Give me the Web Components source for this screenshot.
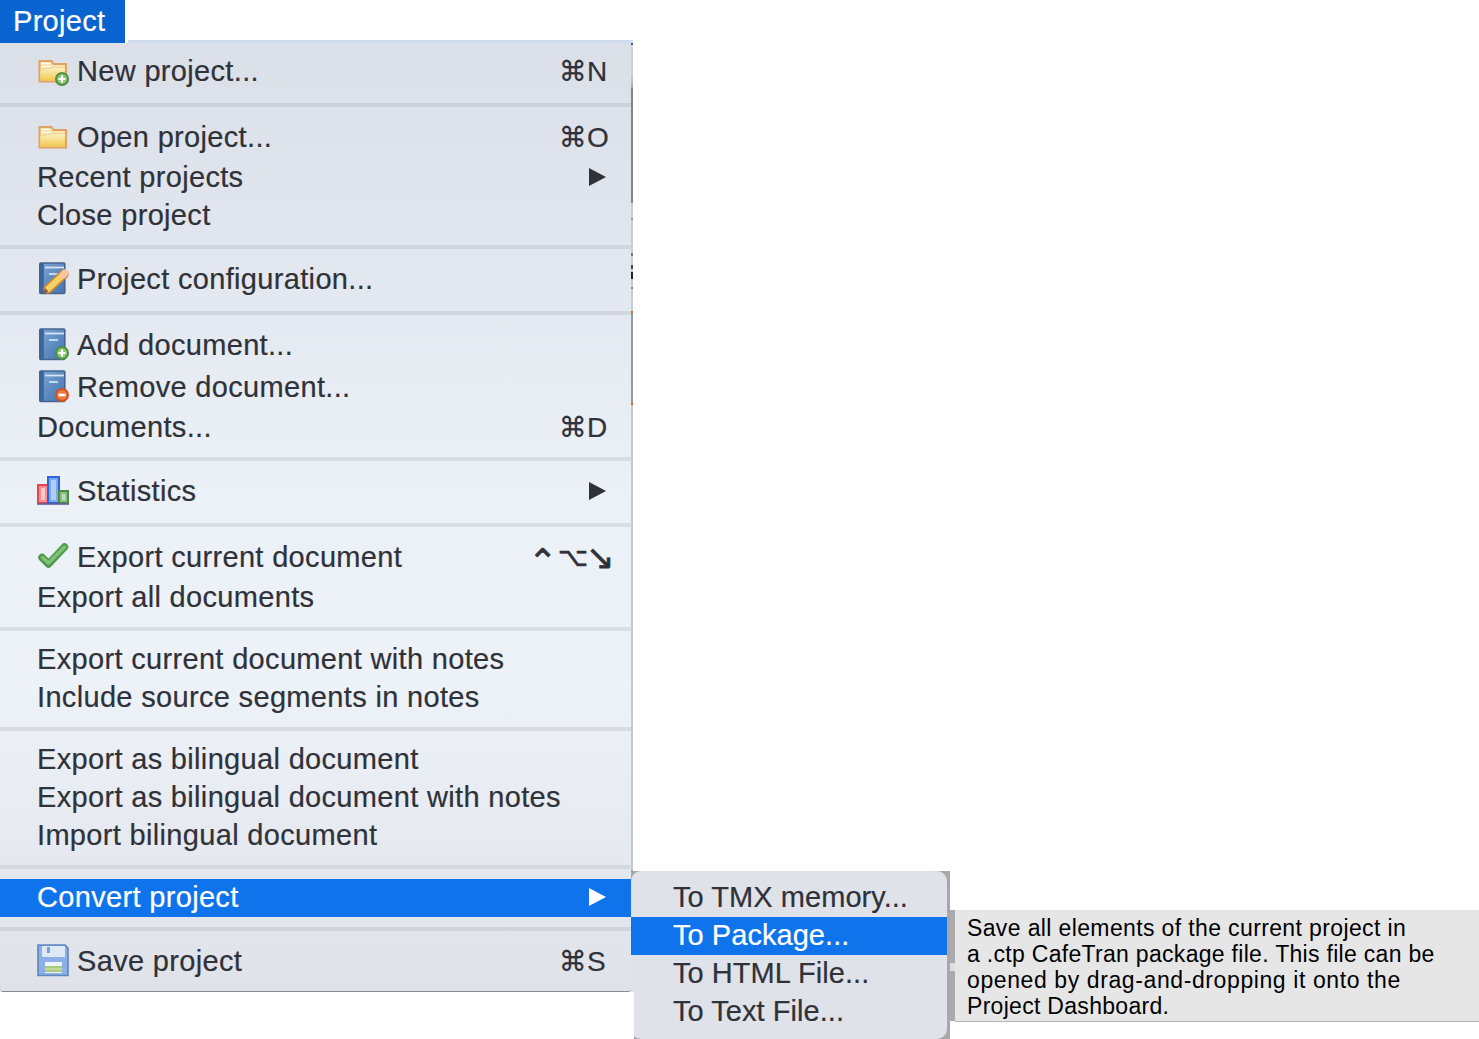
<!DOCTYPE html>
<html>
<head>
<meta charset="utf-8">
<title>Project menu</title>
<style>
  html, body { margin: 0; height: 100%; overflow: hidden; background: #fff; }
  body { font-family: "Liberation Sans", Arial, sans-serif; }
</style>
</head>
<body>
<menu-screen>
  <menu-bar slot="bar" label="Project"></menu-bar>
  <menu-panel slot="menu">
    <menu-group pos="first">
      <menu-item icon="folder-add" shortcut="⌘N">New project...</menu-item>
    </menu-group>
    <menu-group>
      <menu-item icon="folder" shortcut="⌘O">Open project...</menu-item>
      <menu-item arrow>Recent projects</menu-item>
      <menu-item>Close project</menu-item>
    </menu-group>
    <menu-group>
      <menu-item icon="book-edit">Project configuration...</menu-item>
    </menu-group>
    <menu-group>
      <menu-item icon="book-add">Add document...</menu-item>
      <menu-item icon="book-remove">Remove document...</menu-item>
      <menu-item shortcut="⌘D">Documents...</menu-item>
    </menu-group>
    <menu-group>
      <menu-item icon="stats" arrow>Statistics</menu-item>
    </menu-group>
    <menu-group>
      <menu-item icon="check" shortcut="⌃⌥↘">Export current document</menu-item>
      <menu-item>Export all documents</menu-item>
    </menu-group>
    <menu-group>
      <menu-item>Export current document with notes</menu-item>
      <menu-item>Include source segments in notes</menu-item>
    </menu-group>
    <menu-group>
      <menu-item>Export as bilingual document</menu-item>
      <menu-item>Export as bilingual document with notes</menu-item>
      <menu-item>Import bilingual document</menu-item>
    </menu-group>
    <menu-group pos="even">
      <menu-item arrow active>Convert project</menu-item>
    </menu-group>
    <menu-group pos="last">
      <menu-item icon="save" shortcut="⌘S">Save project</menu-item>
    </menu-group>
  </menu-panel>
  <sub-menu slot="overlay">
    <menu-item inset>To TMX memory...</menu-item>
    <menu-item inset active>To Package...</menu-item>
    <menu-item inset>To HTML File...</menu-item>
    <menu-item inset>To Text File...</menu-item>
  </sub-menu>
  <help-tip slot="overlay"><span style="letter-spacing:.37px">Save all elements of the current project in</span><br>a .ctp CafeTran package file. This file can be<br><span style="letter-spacing:.6px">opened by drag-and-dropping it onto the</span><br>Project Dashboard.</help-tip>
</menu-screen>

<script>
const badge = (fill, rim, mark) => `
  <circle cx="25" cy="24" r="7" fill="${rim}"/>
  <circle cx="25" cy="24" r="5" fill="${fill}"/>
  ${mark}`;
const plus = '<path d="M25 20.5v7M21.5 24h7" stroke="#fff" stroke-width="2.2"/>';
const minus = '<path d="M21.5 24h7" stroke="#fff" stroke-width="2.6"/>';

const folder = `
  <defs><linearGradient id="fo" x1="0" y1="0" x2="0" y2="1">
    <stop offset="0" stop-color="#fdf3c4"/><stop offset="1" stop-color="#efc84f"/>
  </linearGradient></defs>
  <path d="M2.5 6h12l2 3h12.500v17.500h-26.500z" fill="#f8e3ad" stroke="#e0a263" stroke-width="2"/>
  <path d="M4 8.500h9M4 11.500h10" stroke="#fff" stroke-width="1.200"/>
  <path d="M3.500 15l13-2.500h11.500v13h-24.500z" fill="url(#fo)"/>
  <path d="M3.500 15l13-2.500h11.500" fill="none" stroke="#f2cf95" stroke-width="1"/>`;

const book = `
  <defs><linearGradient id="bk" x1="0" y1="0" x2="1" y2="1">
    <stop offset="0" stop-color="#7ea6d6"/><stop offset="1" stop-color="#3f74ae"/>
  </linearGradient></defs>
  <rect x="2.800" y="0" width="25" height="30.500" rx="1" fill="url(#bk)" stroke="#46648f" stroke-width="1.600"/>
  <rect x="2.800" y="0" width="4" height="30.500" fill="#3c659c"/>
  <path d="M8 4.500h19" stroke="#d5e3f2" stroke-width="1.800"/>
  <path d="M12 11h9" stroke="#dfeaf6" stroke-width="1.600"/>`;

const ICONS = {
  folder,
  'folder-add': folder + badge('#8cc477', '#4f8f3f', plus),
  'book-edit': book + `
    <path d="M11 26l16-15" stroke="#c9853f" stroke-width="9.500" stroke-linecap="round"/>
    <path d="M11 26l16-15" stroke="#f5d25f" stroke-width="6" stroke-linecap="round"/>
    <path d="M26 12l2-2" stroke="#f4c7a0" stroke-width="7" stroke-linecap="round"/>
    <path d="M6.500 30l5-1.500-3.500-3.500z" fill="#8a5a32"/>`,
  'book-add': book + badge('#8cc477', '#4f8f3f', plus),
  'book-remove': book + badge('#ee7a45', '#d2531d', minus),
  stats: `
    <rect x="1" y="10" width="10" height="18" fill="#f88d92" stroke="#e8454e" stroke-width="2"/>
    <rect x="4" y="13" width="4" height="12" fill="#fcc7c9"/>
    <rect x="11" y="2" width="11" height="26" fill="#7da8ec" stroke="#2c66d6" stroke-width="2"/>
    <rect x="14" y="5" width="5" height="20" fill="#b5cdf4"/>
    <rect x="22" y="16" width="9" height="12" fill="#8dbd80" stroke="#4c8a47" stroke-width="2"/>
    <rect x="25" y="19" width="3.500" height="6" fill="#c0dcb6"/>
    <path d="M0 29h32" stroke="#5c5f9a" stroke-width="1.600"/>`,
  check: `
    <path d="M5 16.500l6.500 6.500 16-17" fill="none" stroke="#4e9a4c" stroke-width="7.500" stroke-linejoin="round" stroke-linecap="round"/>
    <path d="M5.500 16.500l6 5.500 16-16" fill="none" stroke="#7fc277" stroke-width="3.500" stroke-linejoin="round" stroke-linecap="round"/>`,
  save: `
    <path d="M1 0h27l3 3v27.500h-30z" fill="#8cb0e4" stroke="#5c88bd" stroke-width="1.600"/>
    <rect x="5" y="1" width="23" height="11" rx="1" fill="#dfe8f5"/>
    <rect x="10" y="2" width="3" height="6" fill="#7aa2dc"/>
    <rect x="8" y="17" width="17" height="11" fill="#eef3f9"/>
    <rect x="8" y="21" width="17" height="6" fill="#a9cc7c"/>
    <path d="M8 24h17" stroke="#d7e7bf" stroke-width="1"/>`
};

class MenuScreen extends HTMLElement {
  constructor() {
    super();
    this.attachShadow({mode: 'open'}).innerHTML = `
    <style>
      :host { display: block; position: relative; width: 1479px; height: 1039px; overflow: hidden; }
      .col { display: flex; flex-direction: column; width: 633px; }
    </style>
    <div class="col">
      <slot name="bar"></slot>
      <slot name="menu"></slot>
    </div>
    <slot name="overlay"></slot>`;
  }
}

class MenuBar extends HTMLElement {
  constructor() {
    super();
    this.attachShadow({mode: 'open'}).innerHTML = `
    <style>
      :host { display: flex; height: 43px; background: #fff; }
      .tab {
        width: 125px;
        padding-left: 13px;
        box-sizing: border-box;
        background: #0a64d0;
        color: #fff;
        font-size: 29px;
        letter-spacing: .3px;
        -webkit-text-stroke: .2px currentColor;
        line-height: 42px;
      }
      .rule { flex: 1; margin-left: 3px; align-self: flex-end; height: 3px; background: #cfdcef; }
    </style>
    <div class="tab">${this.getAttribute('label')}</div>
    <div class="rule"></div>`;
  }
}

class MenuPanel extends HTMLElement {
  constructor() {
    super();
    // the strip down the right edge is the panel's shadow with bits of what lies behind it
    this.attachShadow({mode: 'open'}).innerHTML = `
    <style>
      :host {
        display: flex;
        flex-direction: column;
        box-sizing: border-box;
        width: 633px;
        height: 949px;
        padding-right: 2px;
        border-bottom: 1px solid #85888c;
        border-radius: 0 0 5px 3px;
        background:
          linear-gradient(#2f5f9f 0 2px, #d0d0d0 2px 30px, #b0b0b0 44px, #858585 45px 160px, #ccc 160px 175px, #999 175px 177px,
            #ccc 177px 210px, #777 210px 213px, #ccc 213px 222px, #444 222px 226px, #ccc 226px 229px, #222 229px 236px,
            #ccc 236px 244px, #888 244px 246px, #ccc 246px 268px, #e2601a 268px 270px, #999 270px 360px, #e2601a 360px 362px,
            #c8c8c8 362px 827px, #9a9a9a 827px) right top / 2px 100% no-repeat,
          linear-gradient(#dbe0e8 0, #e2e6ee 22%, #ecf0f7 48%, #edf1f8 68%, #e6e9f0 85%, #dfe2e9 100%);
      }
    </style>
    <slot></slot>`;
  }
}

class MenuGroup extends HTMLElement {
  constructor() {
    super();
    this.attachShadow({mode: 'open'}).innerHTML = `
    <style>
      :host {
        display: flex;
        flex-direction: column;
        padding: 9px 0 11px;
        border-bottom: 4px solid rgba(30, 40, 70, .09);
      }
      :host([pos="first"]) { padding-top: 7px; }
      :host([pos="even"]) { padding: 10px 0; }
      :host([pos="last"]) { padding-bottom: 9px; border-bottom: 0; }
    </style>
    <slot></slot>`;
  }
}

class MenuItem extends HTMLElement {
  constructor() {
    super();
    const icon = this.getAttribute('icon');
    const shortcut = this.getAttribute('shortcut');
    const iconHtml = icon
      ? `<svg class="icon" width="32" height="32" viewBox="0 0 32 32">${ICONS[icon]}</svg>`
      : '';
    let shortcutHtml = '';
    if (shortcut) {
      shortcutHtml = shortcut.length > 2
        ? `<span class="keys wide">${[...shortcut].map((c, i) => `<span class="k${i}">${c}</span>`).join('')}</span>`
        : `<span class="keys">${shortcut}</span>`;
    }
    const arrowHtml = this.hasAttribute('arrow')
      ? '<svg class="arrow" width="18" height="18" viewBox="0 0 18 18"><path d="M1 0l17 9-17 9z" fill="currentColor"/></svg>'
      : '';
    this.attachShadow({mode: 'open'}).innerHTML = `
    <style>
      :host {
        display: flex;
        align-items: center;
        box-sizing: border-box;
        height: 38px;
        padding: 0 24px 0 37px;
        color: #2f3238;
        font-size: 29px;
        letter-spacing: .33px;
        -webkit-text-stroke: .2px currentColor;
        white-space: nowrap;
      }
      :host([icon]) { height: 42px; }
      :host([active]) { background: #0f74ec; color: #fff; padding-bottom: 2px; }
      :host([inset]) { padding: 0 0 2px 42px; letter-spacing: .05px; }
      .icon { flex: none; margin-right: 8px; overflow: visible; -webkit-text-stroke: 0; }
      .label { flex: 1; }
      .keys {
        flex: none;
        width: 48px;
        font-family: "Liberation Sans", "DejaVu Sans", sans-serif;
        font-size: 28px;
        letter-spacing: 0;
      }
      .wide {
        display: flex;
        align-items: center;
        width: 72px;
        height: 42px;
        -webkit-text-stroke: .7px currentColor;
      }
      .k0 { flex: none; width: 30px; margin: 10px 0 0 -7px; font-size: 35px; }
      .k1 { flex: none; width: 28px; font-size: 26px; }
      .k2 { flex: none; font-size: 34px; }
      .arrow { flex: none; margin-right: 1px; -webkit-text-stroke: 0; }
    </style>
    ${iconHtml}<span class="label"><slot></slot></span>${shortcutHtml}${arrowHtml}`;
  }
}

class SubMenu extends HTMLElement {
  constructor() {
    super();
    // grey square behind the rounded body: it shows at the corners and down the right side
    this.attachShadow({mode: 'open'}).innerHTML = `
    <style>
      :host {
        display: block;
        position: absolute;
        left: 631px;
        top: 871px;
        width: 319px;
        height: 168px;
        background: linear-gradient(#fff, #fff) left bottom / 3px 47px no-repeat, #a8a8a8;
      }
      .body {
        display: flex;
        flex-direction: column;
        box-sizing: border-box;
        width: 316px;
        height: 168px;
        padding-top: 8px;
        border-radius: 10px;
        background: linear-gradient(#fff, #fff) left bottom / 3px 47px no-repeat, #dfe2e9;
      }
    </style>
    <div class="body"><slot></slot></div>`;
  }
}

class HelpTip extends HTMLElement {
  constructor() {
    super();
    this.attachShadow({mode: 'open'}).innerHTML = `
    <style>
      :host {
        display: block;
        position: absolute;
        left: 955px;
        top: 910px;
        box-sizing: border-box;
        width: 524px;
        height: 112px;
        padding: 5px 0 0 12px;
        background: #e6e6e6;
        border-bottom: 1px solid #b5b5b5;
        color: #000;
        font-size: 23px;
        line-height: 26px;
        letter-spacing: .3px;
      }
      :host::before {
        content: "";
        position: absolute;
        left: -5px;
        top: 0;
        width: 5px;
        height: 111px;
        background: linear-gradient(#ababab 0 53px, #dedede 53px 61px, #ababab 61px);
      }
    </style>
    <slot></slot>`;
  }
}

customElements.define('menu-screen', MenuScreen);
customElements.define('menu-bar', MenuBar);
customElements.define('menu-panel', MenuPanel);
customElements.define('menu-group', MenuGroup);
customElements.define('menu-item', MenuItem);
customElements.define('sub-menu', SubMenu);
customElements.define('help-tip', HelpTip);
</script>
</body>
</html>
